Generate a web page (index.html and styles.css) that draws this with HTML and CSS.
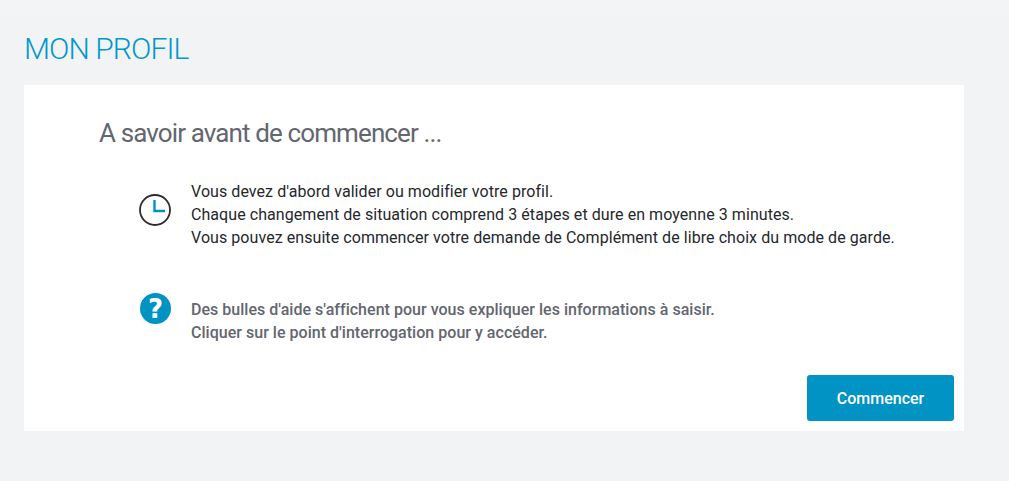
FILE: index.html
```html
<!DOCTYPE html>
<html lang="fr">
<head>
<meta charset="utf-8">
<title>Mon profil</title>
<link rel="stylesheet" href="styles.css">
</head>
<body>
<div class="top-band"></div>
<div class="page">
<h1 class="page-title">MON PROFIL</h1>
<main class="card">
  <h2 class="card-title">A savoir avant de commencer ...</h2>
  <section class="info info-clock">
    <svg class="icon" width="32" height="32" viewBox="0 0 32 32">
      <circle cx="16" cy="16" r="15" fill="none" stroke="#2b2d33" stroke-width="1.8"/>
      <path d="M15.5 6V17H26" fill="none" stroke="#0093c4" stroke-width="2.4"/>
    </svg>
    <p class="text">Vous devez d'abord valider ou modifier votre profil.<br>Chaque changement de situation comprend 3 étapes et dure en moyenne 3 minutes.<br>Vous pouvez ensuite commencer votre demande de Complément de libre choix du mode de garde.</p>
  </section>
  <section class="info info-help">
    <svg class="icon" width="32" height="32" viewBox="0 0 32 32">
      <circle cx="16.5" cy="15.5" r="15.5" fill="#0093c4"/>
      <text x="16.5" y="24.5" text-anchor="middle" class="qmark">?</text>
    </svg>
    <p class="text text-muted">Des bulles d'aide s'affichent pour vous expliquer les informations à saisir.<br>Cliquer sur le point d'interrogation pour y accéder.</p>
  </section>
  <div class="actions"><button class="btn">Commencer</button></div>
</main>
</div>
</body>
</html>
```
FILE: styles.css
```css
html, body { margin: 0; padding: 0; }
body { background: #f2f3f5; font-family: Roboto, sans-serif; height: 481px; overflow: hidden; }
.top-band { height: 9px; background: #f4f4f4; }
.page { padding: 0 45px 0 24px; }
.page-title { margin: 0; padding-top: 22px; padding-bottom: 19px; font-size: 30px; font-weight: 300; line-height: 35px; color: #0099cc; letter-spacing: -0.9px; }
.card { background: #fff; height: 346px; box-sizing: border-box; padding: 33px 10px 10px 75px; display: flex; flex-direction: column; }
.card-title { margin: 0 0 32px; font-size: 26px; font-weight: 400; line-height: 30px; color: #63666f; letter-spacing: -0.88px; }
.info { display: flex; align-items: flex-start; padding-left: 40px; }
.info-clock { height: 108px; }
.info-help { height: 72px; }
.icon { flex: none; }
.info-clock .icon { margin-top: 14px; }
.info-help .icon { margin-top: 5px; }
.text { margin: 0 0 0 20px; font-size: 16px; line-height: 23px; color: #25272c; letter-spacing: 0.065px; }
.info-help .text { margin-top: 10px; }
.text.text-muted { color: #63666f; font-weight: 500; letter-spacing: 0.025px; }
.qmark { font-family: "DejaVu Sans", sans-serif; font-size: 26px; font-weight: 700; fill: #fff; }
.actions { display: flex; justify-content: flex-end; margin-top: auto; }
.btn { width: 147px; height: 46px; border: 0; border-radius: 3px; background: #0093c4; color: #fff; font: 500 16px Roboto, sans-serif; }
```
